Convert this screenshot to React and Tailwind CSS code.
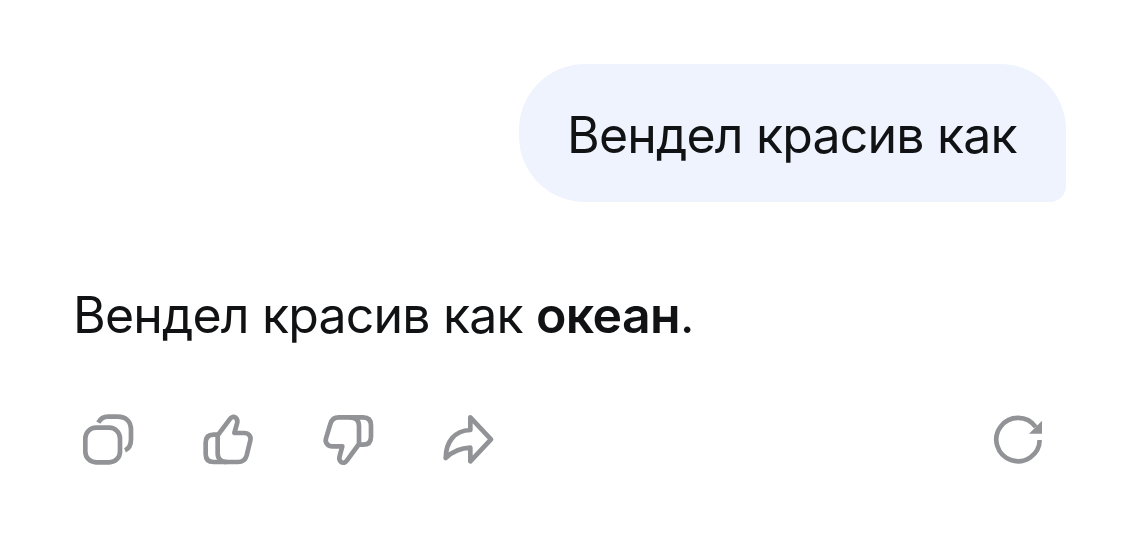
import React from "react";

function Icon({ children }) {
  return (
    <svg
      viewBox="30 30 180 180"
      className="w-15 h-15"
      fill="none"
      stroke="currentColor"
      strokeWidth="14"
      strokeLinejoin="round"
    >
      {children}
    </svg>
  );
}

function CopyIcon() {
  return (
    <Icon>
      <rect x="46" y="83" width="104" height="104" rx="32" />
      <path d="M85 68C91 56 100 50 114 50H142C168 50 183 65 183 90V118C183 134 177 146 165 151" />
    </Icon>
  );
}

function LikeIcon() {
  return (
    <Icon>
      <path d="M83 106L119 58C124 50 131 49 137 53C142 57 143 64 141 71L133 99H163C176 99 184 109 181 121L170 166C166 180 157 186 144 186H110C93 186 83 177 83 160V106Z" />
      <path d="M83 104H71C55 104 47 112 47 128V162C47 178 55 186 71 186H112" />
    </Icon>
  );
}

function DislikeIcon() {
  return (
    <Icon>
      <path d="M147 132L111 181C106 189 99 190 93 186C88 182 87 175 89 168L97 139H67C54 139 44 128 48 115L61 72C65 58 73 52 86 52H120C137 52 147 61 147 78V132Z" />
      <path d="M147 134H159C175 134 183 126 183 110V76C183 60 175 52 159 52H118" />
    </Icon>
  );
}

function ShareIcon() {
  return (
    <Icon>
      <path d="M121 52L183 118L121 184V143C91 144 68 154 47 174C48 125 73 92 121 90V52Z" />
    </Icon>
  );
}

function RefreshIcon() {
  return (
    <Icon>
      <path d="M179 120A65 65 0 1 1 167 81" />
      <path d="M186 62V101H147Z" fill="currentColor" stroke="none" />
    </Icon>
  );
}

const actions = [
  { label: "Копировать", icon: CopyIcon },
  { label: "Нравится", icon: LikeIcon },
  { label: "Не нравится", icon: DislikeIcon },
  { label: "Поделиться", icon: ShareIcon },
];

export default function App() {
  return (
    <div className="h-screen overflow-hidden bg-white font-['Inter',sans-serif] text-[50px] leading-[60px] tracking-[-0.83px] text-[#111214]">
      {/* User message */}
      <div className="flex justify-end pt-16 pr-[60px]">
        <div className="flex h-[138px] w-[547px] items-center whitespace-nowrap rounded-[66px] rounded-br-[16px] bg-[#eef3fe] pl-12 pt-1">
          Вендел красив как
        </div>
      </div>

      {/* Answer */}
      <p className="mt-[83px] pl-[73px] whitespace-nowrap">
        Вендел красив как <strong className="font-semibold tracking-[-0.6px]">океан</strong>.
      </p>

      {/* Actions */}
      <div className="mt-[65px] flex items-center justify-between pl-20 pr-[76px] text-[#929397]">
        <div className="flex gap-15">
          {actions.map(({ label, icon: ActionIcon }) => (
            <button key={label} aria-label={label}>
              <ActionIcon />
            </button>
          ))}
        </div>
        <button aria-label="Обновить">
          <RefreshIcon />
        </button>
      </div>
    </div>
  );
}
